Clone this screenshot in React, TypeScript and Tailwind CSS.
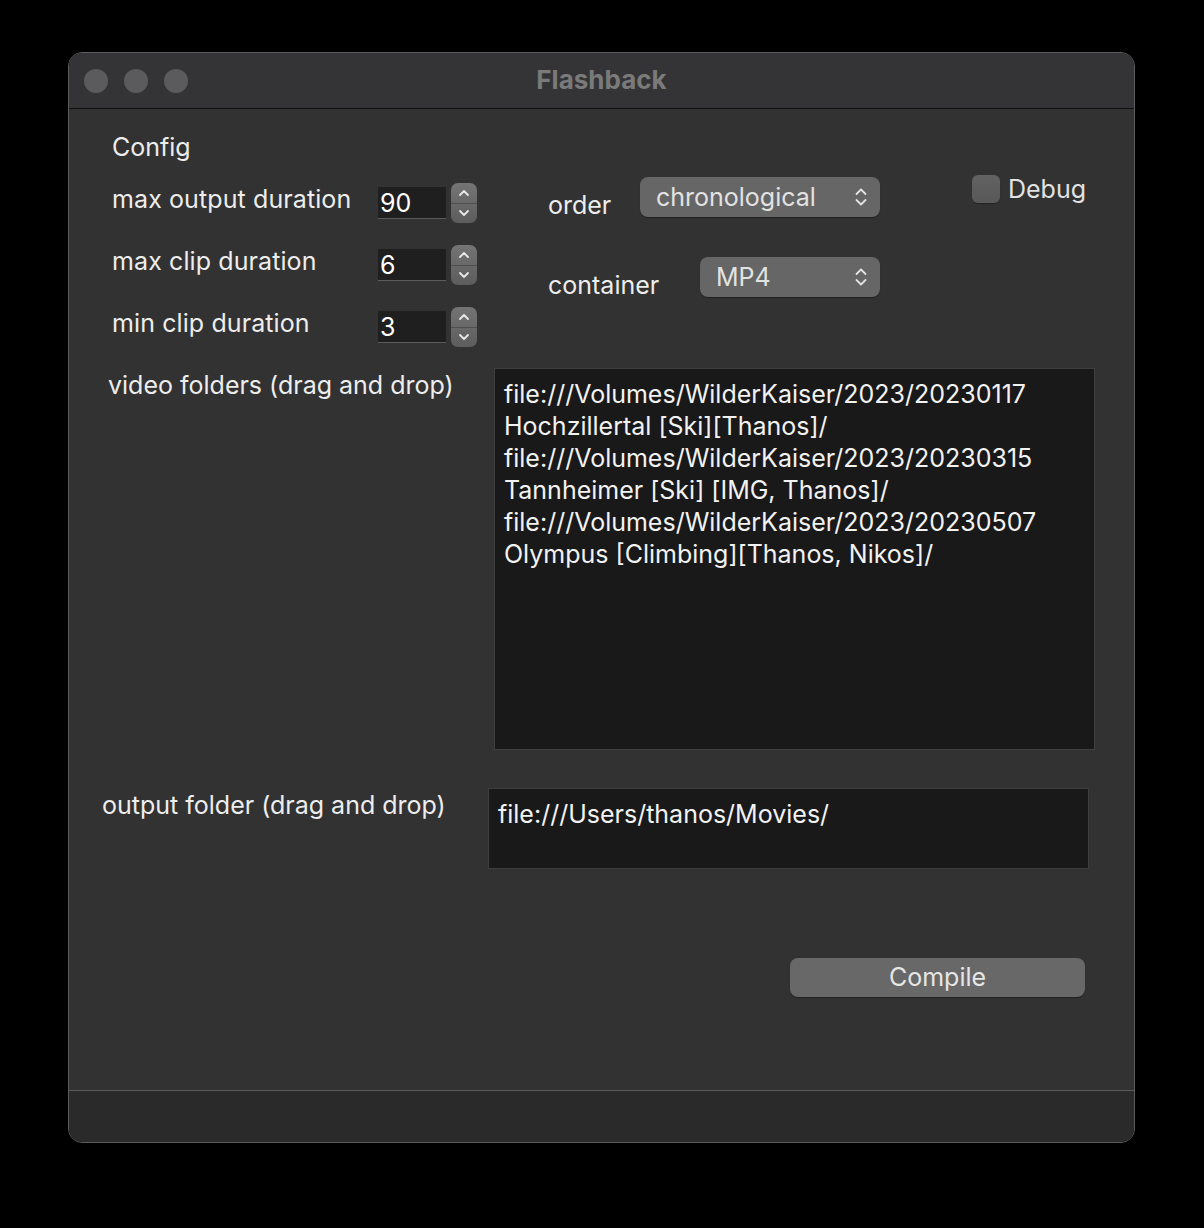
import React from 'react';

const sans = "font-['Inter','Noto_Sans',sans-serif]";

function Stepper() {
  return (
    <div className="ml-[5px] flex h-[40px] w-[26px] flex-col overflow-hidden rounded-[7px] bg-gradient-to-b from-[#747474] to-[#5d5d5d]">
      <div className="flex flex-1 items-center justify-center border-b border-[#4e4e4e]">
        <svg width="12" height="8" viewBox="0 0 12 8" fill="none">
          <path d="M2 6 L6 2 L10 6" stroke="#e8e8e8" strokeWidth="1.8" strokeLinecap="round" strokeLinejoin="round" />
        </svg>
      </div>
      <div className="flex flex-1 items-center justify-center">
        <svg width="12" height="8" viewBox="0 0 12 8" fill="none">
          <path d="M2 2 L6 6 L10 2" stroke="#e8e8e8" strokeWidth="1.8" strokeLinecap="round" strokeLinejoin="round" />
        </svg>
      </div>
    </div>
  );
}

function NumberField({label, value}: {label: string; value: string}) {
  return (
    <div className="flex items-start">
      <div className="w-[266px] whitespace-nowrap leading-[32px] tracking-[0.1px]">{label}</div>
      <div className="mt-[4px] h-[32px] w-[68px] border-b border-[#5c5c5c] bg-[#1f1f1f] pl-[2px] leading-[32px] text-white">{value}</div>
      <Stepper />
    </div>
  );
}

function Select({value, width}: {value: string; width: string}) {
  return (
    <div className={`flex h-[40px] items-center justify-between rounded-[8px] bg-[#666666] pl-[16px] pr-[12px] text-[#e2e2e2] shadow-[0_1px_1px_rgba(0,0,0,0.35)] ${width}`}>
      <span className="leading-[32px]">{value}</span>
      <svg width="14" height="22" viewBox="0 0 14 22" fill="none">
        <path d="M2.5 8 L7 3.5 L11.5 8" stroke="#e2e2e2" strokeWidth="1.8" strokeLinecap="round" strokeLinejoin="round" />
        <path d="M2.5 14 L7 18.5 L11.5 14" stroke="#e2e2e2" strokeWidth="1.8" strokeLinecap="round" strokeLinejoin="round" />
      </svg>
    </div>
  );
}

const videoLines = [
  'file:///Volumes/WilderKaiser/2023/20230117',
  'Hochzillertal [Ski][Thanos]/',
  'file:///Volumes/WilderKaiser/2023/20230315',
  'Tannheimer [Ski] [IMG, Thanos]/',
  'file:///Volumes/WilderKaiser/2023/20230507',
  'Olympus [Climbing][Thanos, Nikos]/',
];

export default function App() {
  return (
    <div className={`h-[1228px] w-[1204px] bg-black pl-[68px] pt-[52px] ${sans} text-[25px] text-[#ededed]`}>
      <div className="flex h-[1091px] w-[1067px] flex-col overflow-hidden rounded-[14px] border border-[#5c5c5c]">
        {/* title bar */}
        <div className="grid h-[56px] grid-cols-3 items-center border-b border-[#101010] bg-[#343436]">
          <div className="flex gap-[16px] pl-[15px]">
            <div className="h-[24px] w-[24px] rounded-full bg-[#5b5b5d]" />
            <div className="h-[24px] w-[24px] rounded-full bg-[#5b5b5d]" />
            <div className="h-[24px] w-[24px] rounded-full bg-[#5b5b5d]" />
          </div>
          <div className="-mt-[2px] text-center text-[26px] font-bold text-[#7a7a7a]">Flashback</div>
          <div />
        </div>

        {/* body */}
        <div className="flex-1 bg-[#323232] pt-[22px]">
          <div className="flex">
            <div className="flex w-[408px] flex-col pl-[43px]">
              <div className="leading-[32px]">Config</div>
              <div className="mt-[20px] flex flex-col gap-[22px]">
                <NumberField label="max output duration" value="90" />
                <NumberField label="max clip duration" value="6" />
                <NumberField label="min clip duration" value="3" />
              </div>
            </div>

            <div className="ml-[71px] flex flex-col gap-[36px] pt-[46px]">
              <div className="flex items-start">
                <div className="mt-[12px] w-[92px] leading-[32px]">order</div>
                <Select value="chronological" width="w-[240px]" />
              </div>
              <div className="flex items-start">
                <div className="mt-[12px] w-[152px] leading-[32px]">container</div>
                <Select value="MP4" width="w-[180px]" />
              </div>
            </div>

            <div className="ml-[92px] flex items-center gap-[8px] self-start pt-[42px]">
              <div className="h-[28px] w-[28px] rounded-[6px] bg-gradient-to-b from-[#626262] to-[#585858] shadow-[0_1px_1px_rgba(0,0,0,0.3)]" />
              <span className="leading-[32px] text-[#e2e2e2]">Debug</span>
            </div>
          </div>

          <div className="mt-[21px] flex pl-[39px]">
            <div className="mt-[1px] w-[386px] whitespace-nowrap leading-[32px]">video folders (drag and drop)</div>
            <div className="h-[382px] w-[601px] border border-[#3e3e3e] bg-[#191919] pl-[9px] pt-[9px] text-[#f2f2f2]">
              {videoLines.map((l, i) => (
                <div key={i} className="whitespace-nowrap leading-[32px]">{l}</div>
              ))}
            </div>
          </div>

          <div className="mt-[38px] flex pl-[33px]">
            <div className="mt-[1px] w-[386px] whitespace-nowrap leading-[32px]">output folder (drag and drop)</div>
            <div className="h-[81px] w-[601px] border border-[#3e3e3e] bg-[#191919] pl-[9px] pt-[9px] text-[#f2f2f2]">
              <div className="leading-[32px]">file:///Users/thanos/Movies/</div>
            </div>
          </div>

          <div className="mt-[89px] pl-[721px]">
            <div className="flex h-[39px] w-[295px] items-center justify-center rounded-[8px] bg-[#686868] text-[#e6e6e6] shadow-[0_1px_1px_rgba(0,0,0,0.35)]">
              Compile
            </div>
          </div>
        </div>

        {/* bottom bar */}
        <div className="h-[52px] border-t border-[#5a5a5a] bg-[#2a2a2a]" />
      </div>
    </div>
  );
}
